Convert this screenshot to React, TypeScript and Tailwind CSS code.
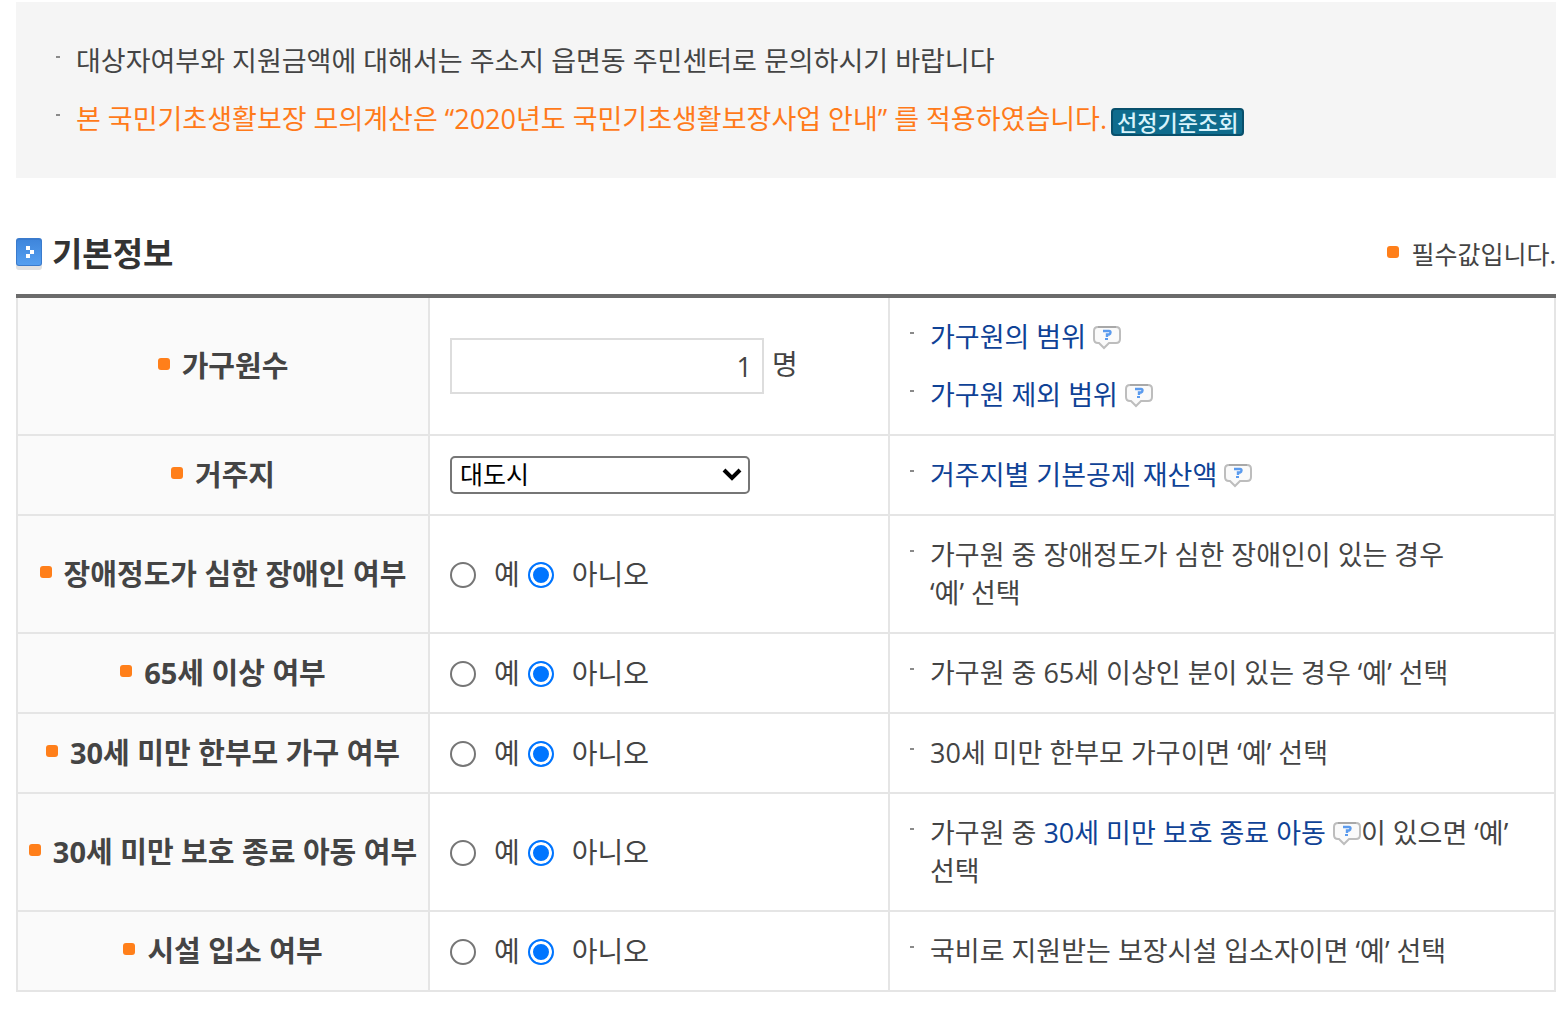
import React, { useState } from 'react';

const FONT = "font-['Open_Sans','Noto_Sans_CJK_KR',sans-serif]";

function RequiredDot() {
  return <span className="w-3 h-3 mb-1 shrink-0 rounded-[3px] bg-[#ff7f1a]" />;
}

function HelpIcon() {
  return (
    <svg className="inline-block w-7 h-6 align-[-3px]" viewBox="0 0 28 24" role="img" aria-label="도움말">
      <path d="M5 1h18q4 0 4 4v8q0 4-4 4h-7l-5 5-5-5H5q-4 0-4-4V5q0-4 4-4z" fill="#fafafa" stroke="#bdbdbd" strokeWidth="2" />
      <path d="M5 1h18" stroke="#a8a8a8" strokeWidth="2" />
      <path d="M10 5h6q1.500 0 1.500 1.500T16 8.500h-2V11" fill="none" stroke="#5b9bee" strokeWidth="2.400" />
      <path d="M12 12h3v2h-3z" fill="#5b9bee" />
    </svg>
  );
}

function HelpLink({ children }: { children: React.ReactNode }) {
  return (
    <a href="#help" className="text-[#0f4296]">
      {children} <HelpIcon />
    </a>
  );
}

function Note({ children }: { children: React.ReactNode }) {
  return (
    <li className="flex">
      <span className="w-1 h-[2px] mt-[14px] mr-4 shrink-0 bg-[#8a8a8a]" />
      <div>{children}</div>
    </li>
  );
}

function YesNo({ name, label }: { name: string; label: string }) {
  const [value, setValue] = useState('no');
  const radio =
    'appearance-none w-[26px] h-[26px] mt-[2px] rounded-full border-2 border-[#767676] bg-white checked:border-[#0075ff] checked:bg-[#0075ff] checked:shadow-[inset_0_0_0_3px_white]';

  return (
    <div role="radiogroup" aria-label={label} className="flex items-center gap-2 text-[28px]">
      <label className="flex items-center gap-[18px]">
        <input type="radio" name={name} className={radio} checked={value === 'yes'} onChange={() => setValue('yes')} />
        예
      </label>
      <label className="flex items-center gap-[18px]">
        <input type="radio" name={name} className={radio} checked={value === 'no'} onChange={() => setValue('no')} />
        아니오
      </label>
    </div>
  );
}

function Row({ label, htmlFor, field, children }: {
  label: string;
  htmlFor?: string;
  field?: React.ReactNode;
  children: React.ReactNode;
}) {
  return (
    <tr>
      <th scope="row" className="border-2 border-[#e5e5e5] bg-[#fafafa] text-[29px] font-bold whitespace-nowrap">
        <div className="flex items-center justify-center gap-3">
          <RequiredDot />
          {htmlFor ? <label htmlFor={htmlFor}>{label}</label> : <span>{label}</span>}
        </div>
      </th>
      <td className="border-2 border-[#e5e5e5] px-5">{field}</td>
      <td className="border-2 border-[#e5e5e5] p-5">
        <ul className="flex flex-col gap-5">{children}</ul>
      </td>
    </tr>
  );
}

export default function App() {
  const [members, setMembers] = useState('1');
  const [region, setRegion] = useState('대도시');

  return (
    <div lang="ko" className={`${FONT} min-h-screen bg-white pt-[2px] pl-4 pr-1 text-[27px] leading-[38px] text-[#444]`}>
      {/* 안내 */}
      <ul className="flex flex-col gap-5 bg-[#f5f5f5] p-10">
        <Note>대상자여부와 지원금액에 대해서는 주소지 읍면동 주민센터로 문의하시기 바랍니다</Note>
        <Note>
          <div className="flex items-center gap-1">
            <span className="text-[#ff7a1a]">
              본 국민기초생활보장 모의계산은 “2020년도 국민기초생활보장사업 안내” 를 적용하였습니다.
            </span>
            <button type="button" className="h-7 px-1 mt-[6px] rounded border-2 border-[#08506c] bg-[#0f6c8d] text-[22px] leading-5 font-medium text-[#d9f3fb]">
              선정기준조회
            </button>
          </div>
        </Note>
      </ul>

      {/* 기본정보 */}
      <div className="mt-14 mb-5 flex items-center justify-between">
        <h2 className="flex items-center gap-[10px] text-[33px] leading-10 font-bold text-[#333]">
          <svg className="w-[26px] h-8" viewBox="0 0 26 32" aria-hidden="true">
            <defs>
              <linearGradient id="blueBox" x1="0" y1="0" x2="0" y2="1">
                <stop offset="0" stopColor="#3f86dc" />
                <stop offset="1" stopColor="#559ff0" />
              </linearGradient>
            </defs>
            <rect y="4" width="26" height="28" rx="3" fill="#e2e2e2" />
            <rect width="26" height="28" rx="3" fill="#3a7bcd" />
            <rect x="1" y="2" width="24" height="25" rx="2" fill="url(#blueBox)" />
            <path d="M10 8h4v4h-4zM14 12h4v4h-4zM10 16h4v4h-4z" fill="#fff" />
          </svg>
          기본정보
        </h2>
        <p className="flex items-center gap-3 text-[25px]">
          <RequiredDot />
          필수값입니다.
        </p>
      </div>

      <table className="w-full table-fixed border-collapse border-t-4 border-t-[#6b6b6b]">
        <colgroup>
          <col className="w-[412px]" />
          <col className="w-[460px]" />
          <col />
        </colgroup>
        <tbody>
          <Row
            label="가구원수"
            htmlFor="members"
            field={
              <div className="flex items-center gap-2 text-[28px]">
                <input
                  id="members"
                  type="text"
                  className="w-[314px] h-14 px-[10px] border-2 border-[#ddd] bg-white text-right text-[27px]"
                  value={members}
                  onChange={(e) => setMembers(e.target.value)}
                />
                <span className="mb-1">명</span>
              </div>
            }
          >
            <Note><HelpLink>가구원의 범위</HelpLink></Note>
            <Note><HelpLink>가구원 제외 범위</HelpLink></Note>
          </Row>
          <Row
            label="거주지"
            htmlFor="region"
            field={
              <div className="relative w-[300px]">
                <select
                  id="region"
                  className="block w-full h-[38px] px-2 pb-1 appearance-none rounded-[5px] border-2 border-[#767676] bg-white text-[25px] leading-8 text-black"
                  value={region}
                  onChange={(e) => setRegion(e.target.value)}
                >
                  <option>대도시</option>
                  <option>중소도시</option>
                  <option>농어촌</option>
                </select>
                <svg className="absolute right-2 top-3 w-5 h-4 pointer-events-none" viewBox="0 0 20 16" aria-hidden="true">
                  <path d="M2 2l8 8 8-8" fill="none" stroke="#000" strokeWidth="4" />
                </svg>
              </div>
            }
          >
            <Note><HelpLink>거주지별 기본공제 재산액</HelpLink></Note>
          </Row>
          <Row label="장애정도가 심한 장애인 여부" field={<YesNo name="disabled" label="장애정도가 심한 장애인 여부" />}>
            <Note>
              가구원 중 장애정도가 심한 장애인이 있는 경우
              <br />
              ‘예’ 선택
            </Note>
          </Row>
          <Row label="65세 이상 여부" field={<YesNo name="senior" label="65세 이상 여부" />}>
            <Note>가구원 중 65세 이상인 분이 있는 경우 ‘예’ 선택</Note>
          </Row>
          <Row label="30세 미만 한부모 가구 여부" field={<YesNo name="singleParent" label="30세 미만 한부모 가구 여부" />}>
            <Note>30세 미만 한부모 가구이면 ‘예’ 선택</Note>
          </Row>
          <Row label="30세 미만 보호 종료 아동 여부" field={<YesNo name="careLeaver" label="30세 미만 보호 종료 아동 여부" />}>
            <Note>
              가구원 중 <HelpLink>30세 미만 보호 종료 아동</HelpLink>이 있으면 ‘예’
              <br />
              선택
            </Note>
          </Row>
          <Row label="시설 입소 여부" field={<YesNo name="facility" label="시설 입소 여부" />}>
            <Note>국비로 지원받는 보장시설 입소자이면 ‘예’ 선택</Note>
          </Row>
        </tbody>
      </table>
    </div>
  );
}
